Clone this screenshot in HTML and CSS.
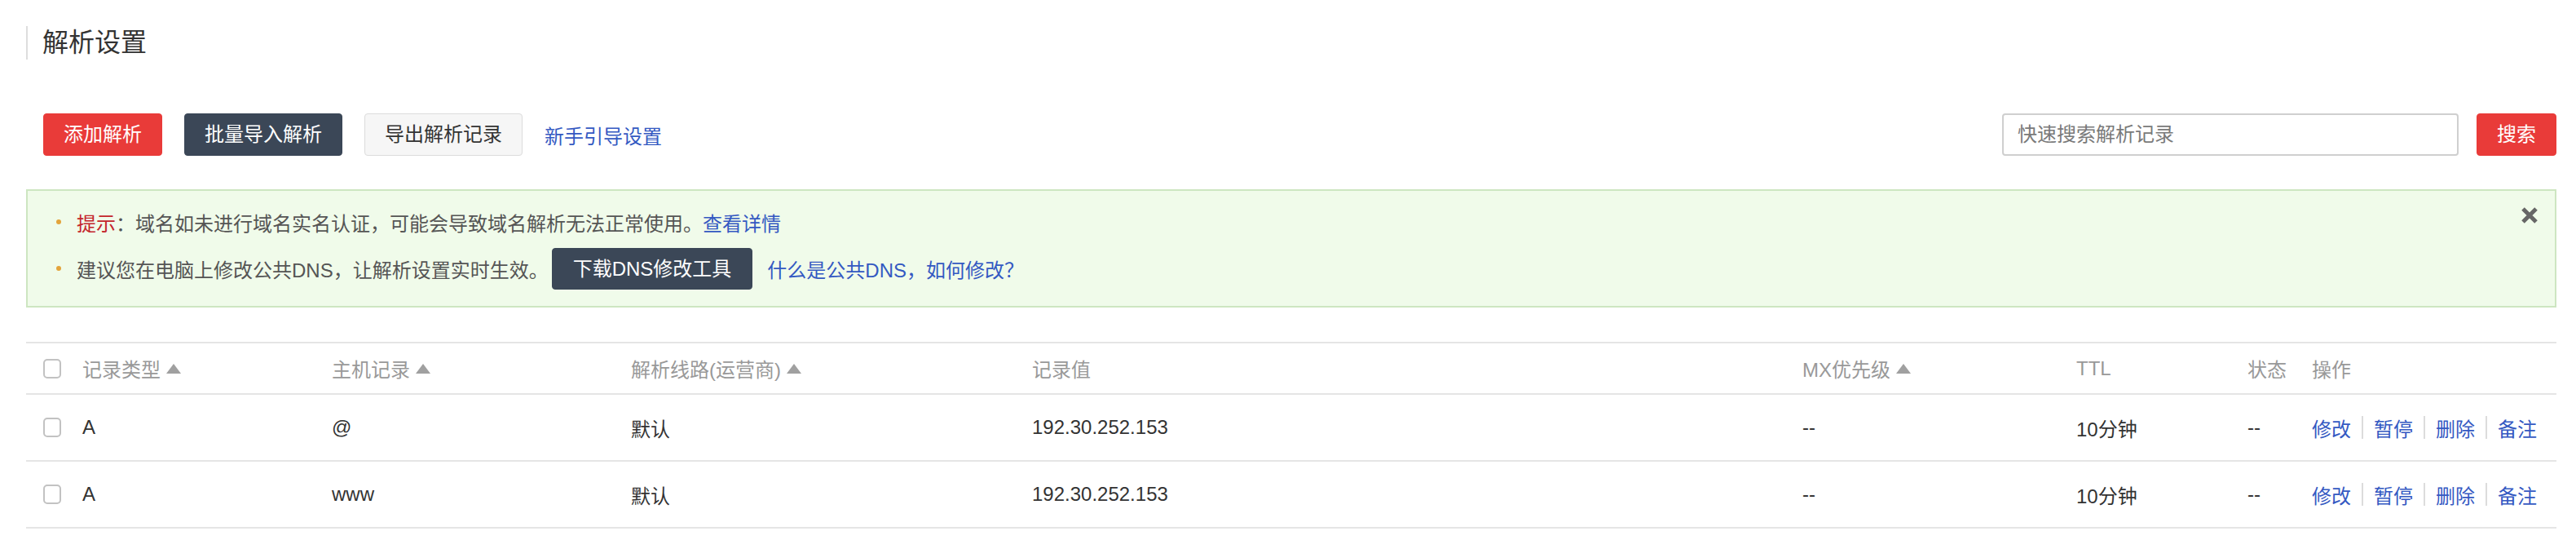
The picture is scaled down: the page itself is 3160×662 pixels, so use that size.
FILE: index.html
```html
<!DOCTYPE html>
<html lang="zh-CN">
<head>
<meta charset="utf-8">
<title>解析设置</title>
<link rel="stylesheet" href="styles.css">
</head>
<body>
<div class="page">
  <h1 class="title">解析设置</h1>

  <div class="toolbar">
    <div class="actions">
      <button class="btn btn-red">添加解析</button>
      <button class="btn btn-dark">批量导入解析</button>
      <button class="btn btn-light">导出解析记录</button>
      <a class="link">新手引导设置</a>
    </div>
    <div class="search">
      <input class="search-input" type="text" placeholder="快速搜索解析记录">
      <button class="btn btn-red">搜索</button>
    </div>
  </div>

  <div class="notice">
    <ul class="notice-list">
      <li class="notice-item"><span class="hint">提示</span>：域名如未进行域名实名认证，可能会导致域名解析无法正常使用。<a class="link">查看详情</a></li>
      <li class="notice-item notice-item-tall">建议您在电脑上修改公共DNS，让解析设置实时生效。<button class="btn btn-dark btn-dns">下载DNS修改工具</button><a class="link link-dns">什么是公共DNS，如何修改？</a></li>
    </ul>
    <span class="close" aria-label="关闭"><svg width="22" height="22" viewBox="0 0 22 22"><path d="M3 3 L19 19 M19 3 L3 19" stroke="#666" stroke-width="5" stroke-linecap="butt"/></svg></span>
  </div>

  <div class="table">
    <div class="row row-head">
      <span class="cell"><span class="checkbox"></span></span>
      <span class="cell">记录类型<svg class="sort" width="18" height="12" viewBox="0 0 18 12"><polygon points="9,0 18,12 0,12" fill="#a0a0a0"/></svg></span>
      <span class="cell">主机记录<svg class="sort" width="18" height="12" viewBox="0 0 18 12"><polygon points="9,0 18,12 0,12" fill="#a0a0a0"/></svg></span>
      <span class="cell">解析线路(运营商)<svg class="sort" width="18" height="12" viewBox="0 0 18 12"><polygon points="9,0 18,12 0,12" fill="#a0a0a0"/></svg></span>
      <span class="cell">记录值</span>
      <span class="cell">MX优先级<svg class="sort" width="18" height="12" viewBox="0 0 18 12"><polygon points="9,0 18,12 0,12" fill="#a0a0a0"/></svg></span>
      <span class="cell">TTL</span>
      <span class="cell">状态</span>
      <span class="cell">操作</span>
    </div>
    <div class="row">
      <span class="cell"><span class="checkbox"></span></span>
      <span class="cell">A</span>
      <span class="cell">@</span>
      <span class="cell">默认</span>
      <span class="cell">192.30.252.153</span>
      <span class="cell">--</span>
      <span class="cell">10分钟</span>
      <span class="cell">--</span>
      <span class="cell ops"><a class="link">修改</a><i class="sep"></i><a class="link">暂停</a><i class="sep"></i><a class="link">删除</a><i class="sep"></i><a class="link">备注</a></span>
    </div>
    <div class="row">
      <span class="cell"><span class="checkbox"></span></span>
      <span class="cell">A</span>
      <span class="cell">www</span>
      <span class="cell">默认</span>
      <span class="cell">192.30.252.153</span>
      <span class="cell">--</span>
      <span class="cell">10分钟</span>
      <span class="cell">--</span>
      <span class="cell ops"><a class="link">修改</a><i class="sep"></i><a class="link">暂停</a><i class="sep"></i><a class="link">删除</a><i class="sep"></i><a class="link">备注</a></span>
    </div>
  </div>
</div>
</body>
</html>
```

FILE: styles.css
```css
* { box-sizing: border-box; }

html, body {
  margin: 0;
  padding: 0;
  background: #fff;
}

body {
  font-family: "Liberation Sans", "Noto Sans CJK SC", sans-serif;
  font-size: 24px;
  color: #333;
}

.page {
  padding: 32px 24px 0 32px;
}

.title {
  margin: 0;
  height: 41px;
  line-height: 41px;
  border-left: 2px solid #ddd;
  padding-left: 18px;
  font-size: 32px;
  font-weight: normal;
  color: #333;
}

.toolbar {
  margin-top: 66px;
  height: 52px;
  padding-left: 21px;
  display: flex;
  justify-content: space-between;
  align-items: center;
}

.actions {
  display: flex;
  align-items: center;
  gap: 27px;
}

.btn {
  height: 52px;
  padding: 0 24px;
  border: 1px solid transparent;
  border-radius: 4px;
  font-family: inherit;
  font-size: 24px;
  line-height: 50px;
  white-space: nowrap;
}

.btn-red {
  background: #e93b39;
  border-color: #e93b39;
  color: #fff;
}

.btn-dark {
  background: #3b4757;
  border-color: #3b4757;
  color: #fff;
}

.btn-light {
  background: #f6f6f6;
  border-color: #dcdcdc;
  color: #333;
}

.link {
  color: #3459c2;
  text-decoration: none;
  white-space: nowrap;
}

.search {
  display: flex;
  align-items: center;
  gap: 22px;
}

.search-input {
  width: 560px;
  height: 52px;
  border: 2px solid #cfcfcf;
  border-radius: 4px;
  padding: 0 17px;
  font-family: inherit;
  font-size: 24px;
  color: #333;
  outline: none;
}

.search-input::placeholder {
  color: #7a7a7a;
}

.notice {
  position: relative;
  margin-top: 41px;
  height: 145px;
  background: #f0fbea;
  border: 2px solid #cde6c1;
  padding: 18px 0 0 35px;
}

.notice-list {
  margin: 0;
  padding: 0;
  list-style: none;
  display: flex;
  flex-direction: column;
  gap: 11px;
}

.notice-item {
  display: flex;
  align-items: center;
  height: 40px;
  color: #555;
  white-space: nowrap;
}

.notice-item::before {
  content: "";
  width: 6px;
  height: 6px;
  border-radius: 50%;
  background: #e3a43c;
  margin-right: 19px;
  flex: none;
}

.notice-item-tall {
  height: 52px;
}

.hint {
  color: #c4252b;
}

.btn-dns {
  margin-left: 4px;
  height: 51px;
  padding: 0 25px;
}

.link-dns {
  margin-left: 18px;
}

.close {
  position: absolute;
  top: 19px;
  right: 20px;
  width: 22px;
  height: 22px;
  display: block;
}

.close svg {
  display: block;
}

.table {
  margin-top: 42px;
  border-top: 2px solid #e5e5e5;
}

.row {
  display: grid;
  grid-template-columns: 48px 306px 367px 492px 945px 336px 210px 79px 1fr;
  align-items: center;
  height: 82px;
  padding-left: 21px;
  border-bottom: 2px solid #e5e5e5;
  color: #333;
}

.row-head {
  height: 63px;
  color: #999;
}

.cell {
  display: flex;
  align-items: center;
  white-space: nowrap;
}

.sort {
  margin-left: 7px;
  display: block;
}

.checkbox {
  display: block;
  width: 22px;
  height: 24px;
  border: 2px solid #c2c2c2;
  border-radius: 5px;
  background: #fff;
}

.ops .sep {
  display: block;
  width: 2px;
  height: 28px;
  background: #dcdcdc;
  margin: 0 13px;
}
```
